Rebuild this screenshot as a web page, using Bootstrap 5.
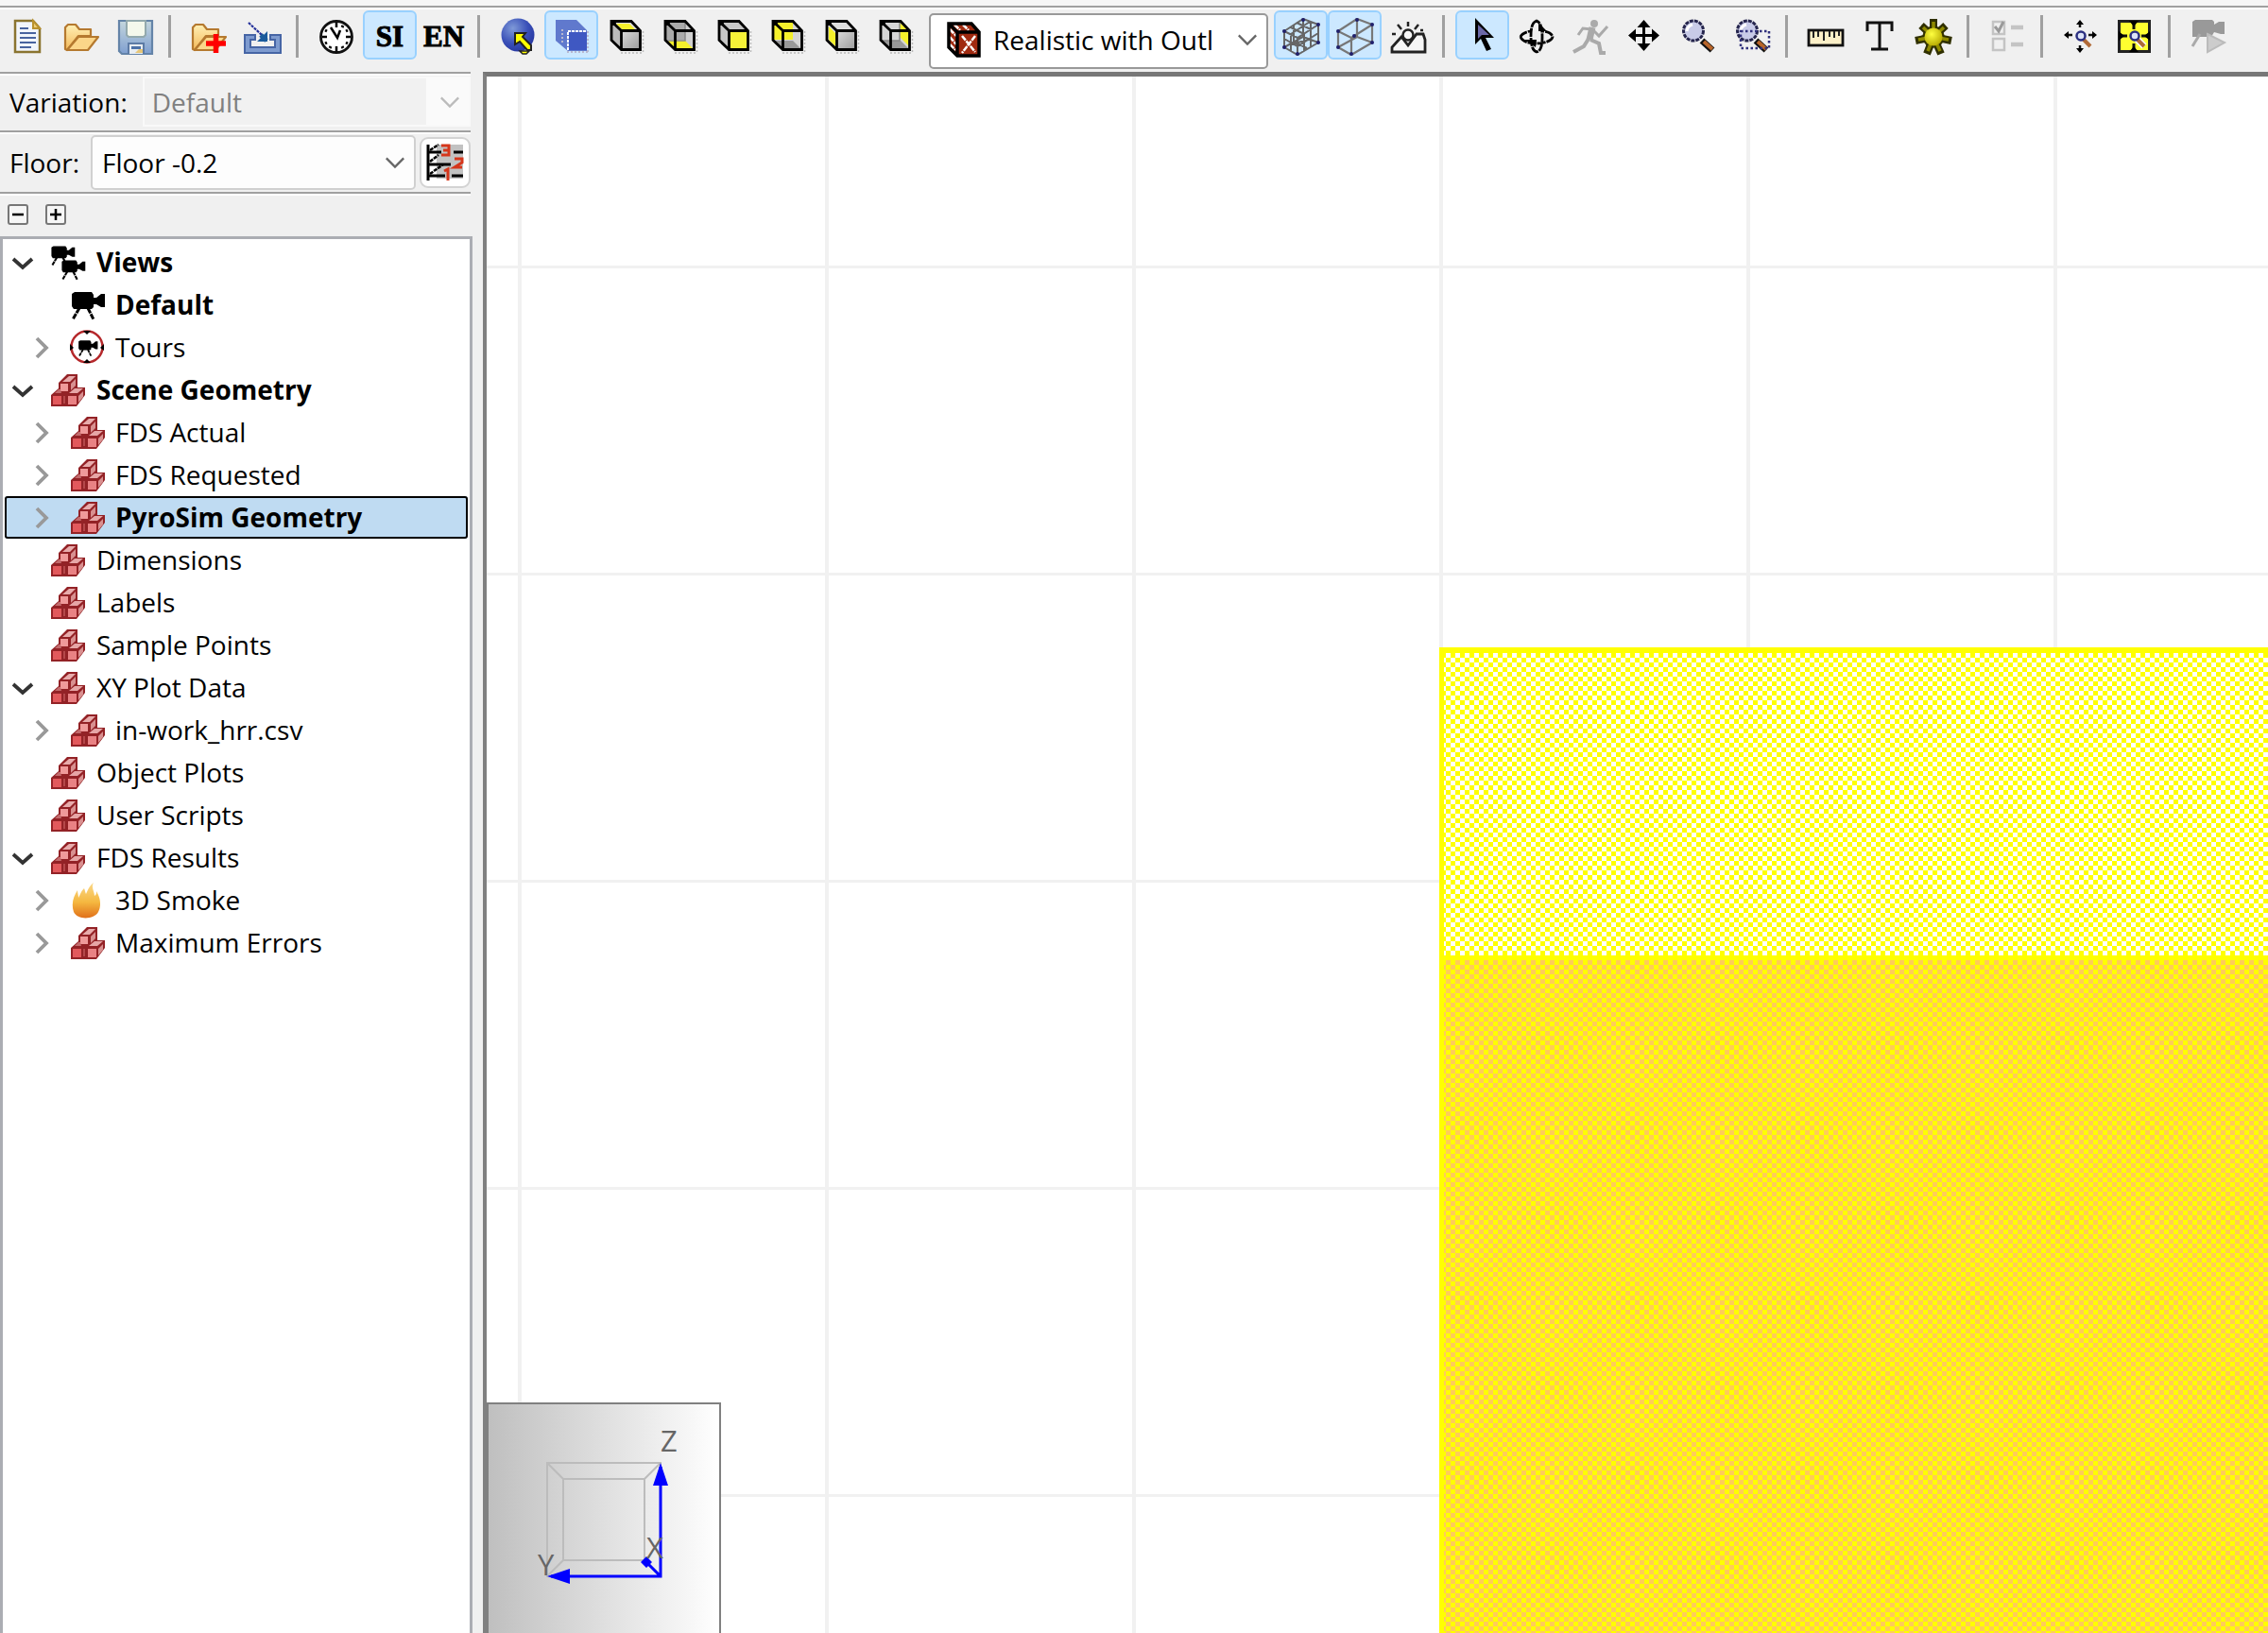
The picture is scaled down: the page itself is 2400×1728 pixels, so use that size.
<!DOCTYPE html>
<html lang="en">
<head>
<meta charset="utf-8">
<meta name="viewport" content="width=device-width, initial-scale=1">
<title>Results Viewer</title>
<link rel="stylesheet" href="https://cdn.jsdelivr.net/npm/bootstrap@5.3.0/dist/css/bootstrap.min.css">
<style>
body{font-family:"Open Sans","Noto Sans",sans-serif;font-size:28px;line-height:40px;color:#000;background:#f0f0f0}
.topstrip{height:10px;background:#f6f6f6;border-bottom:2px solid #fff;box-shadow:inset 0 -2px #a0a0a0}
.toolbar{height:66px}
.tool{width:57px;height:52px;margin-top:1px;padding:6px 0 2px;border:2px solid transparent;border-radius:6px;line-height:0;color:#000}
.tool.active{background:#cce8ff;border-color:#99d1ff}
.tool:disabled{border-color:transparent;opacity:1}
.tool svg{width:40px;height:40px;display:block;margin:auto}
.tool-text{font:bold 31px/40px "Liberation Serif",serif;-webkit-text-stroke:1px #000}
.divider{width:3px;height:45px;margin:6px 11px 0 7px;background:#a0a0a0}
.combo{height:59px;border:2px solid #999;border-radius:5px;background:#fff}
.render-combo{width:359px;margin:4px 6px 0 8px;padding:0 0 3px 16px}
.pick{font-size:28px;line-height:40px;color:#000;border:0;background-color:transparent;padding:0 0 0 12px;border-radius:0;
background-image:url("data:image/svg+xml,%3Csvg xmlns='http://www.w3.org/2000/svg' viewBox='0 0 24 24'%3E%3Cpath d='M2 7l10 10 10-10' fill='none' stroke='%23666' stroke-width='2.5'/%3E%3C/svg%3E");background-size:22px 22px;background-position:right 9px center}
.pick:focus{box-shadow:none}
.side{width:511px}
.band{width:498px;border-top:2px solid #a0a0a0;box-shadow:inset 0 2px #fff}
.variation{height:62px;padding:3px 0 4px 10px}
.floor{height:65px;padding:3px 0 2px 10px}
.floor .pick{padding-left:10px}
.expanders{height:47px;padding:11px 8px;gap:18px}
.variation .pick{height:53px;border:2px solid #f9f9f9;padding-left:8px;color:#808080;opacity:1;background-color:#f1f1f1;
background-image:url("data:image/svg+xml,%3Csvg xmlns='http://www.w3.org/2000/svg' viewBox='0 0 24 24'%3E%3Cpath d='M2 7l10 10 10-10' fill='none' stroke='%23bbb' stroke-width='2.5'/%3E%3C/svg%3E"),linear-gradient(#fafafa,#fafafa);
background-size:22px 22px,45px 100%;background-position:right 9px center,right center;background-repeat:no-repeat}
.floor-combo{border-color:#d0d0d0;background:#fdfdfd;width:344px;height:58px}
.floor-btn{width:54px;height:54px;background:#fff;border:2px solid #d3d3d3;border-radius:9px;padding:0;line-height:0}
.mini{width:22px;height:22px;border:2px solid #777;border-radius:3px;background:#f6f6f6;padding:0;line-height:0}
.mini svg{width:18px;height:18px;display:block}
.tree{width:500px;border:3px solid #abadb3;border-bottom:0;background:#fff;padding:2px 2px 0}
.node{height:45px;padding-left:0;line-height:41px}
.node.child{padding-left:21px}
.node.selected{background:#bfdbf2;border-radius:3px;box-shadow:inset 0 0 0 2px #000}
.twist{width:38px;height:45px;border:0;background:none;padding:0;margin-right:10px;line-height:0}
.twist svg{width:26px;height:26px}
.glyph{width:38px;height:38px;margin-right:11px}
.node.child .glyph{margin-right:10px}
.view{border-left:4px solid #808080;border-top:5px solid #777;background:#fff}
.scene{position:absolute;inset:0;width:100%;height:100%}
.navcube{position:absolute;left:0;bottom:0;width:248px;height:244px}
.axis{font-family:"Open Sans",sans-serif;font-size:31px}
</style>
</head>
<body class="vh-100 d-flex flex-column overflow-hidden">

<svg width="0" height="0" class="position-absolute" aria-hidden="true">
<defs>
<linearGradient id="gold" x1="0" y1="0" x2="0" y2="1"><stop offset="0" stop-color="#fff0b5"/><stop offset="1" stop-color="#f3b95a"/></linearGradient>
<linearGradient id="steel" x1="0" y1="0" x2="0" y2="1"><stop offset="0" stop-color="#c5d7dd"/><stop offset="1" stop-color="#7f9fd0"/></linearGradient>
<linearGradient id="grey" x1="0" y1="0" x2="1" y2="1"><stop offset="0" stop-color="#ddd"/><stop offset="1" stop-color="#999"/></linearGradient>
<linearGradient id="fire" x1="0" y1="0" x2="0" y2="1"><stop offset="0" stop-color="#fbd98a"/><stop offset=".55" stop-color="#f5b840"/><stop offset="1" stop-color="#e0701a"/></linearGradient>
<radialGradient id="ball" cx=".35" cy=".3" r=".75"><stop offset="0" stop-color="#7f9ad8"/><stop offset=".6" stop-color="#3a50b8"/><stop offset="1" stop-color="#2636a0"/></radialGradient>
<radialGradient id="sunball" cx=".4" cy=".35" r=".7"><stop offset="0" stop-color="#ffff40"/><stop offset="1" stop-color="#b5a800"/></radialGradient>
<symbol id="folder" viewBox="0 0 40 40"><path d="M3 33V10l3-3h8l4 5h12v7H17L5 34z" fill="url(#gold)" stroke="#b5792f" stroke-width="2.2" stroke-linejoin="round"/><path d="M5 34L17 20h21L27 34z" fill="#fbd689" stroke="#b5792f" stroke-width="2.2" stroke-linejoin="round"/></symbol>
<symbol id="cubeedges" viewBox="0 0 40 40"><path d="M5 3.500H26L35.500 13.500V33.500H15.500L5 23.500zM5 3.500L15.500 13.500M15.500 33.500V13.500H35.500" fill="none" stroke="#000" stroke-width="2.800"/><path d="M4 2h7L9 8H4z"/><path d="M15 37H38M38.500 14V36" stroke="#bbb" stroke-width="1.500" stroke-dasharray="2 2"/></symbol>
<symbol id="cam" viewBox="0 0 38 38"><path d="M2 4l3-2h18l2 3v3h3l5-4h4v14h-4l-5-3h-3v3l-2 2H4l-2-3z"/><path d="M10 19L3 31M19 19l6 12" stroke="currentColor" stroke-width="3" stroke-dasharray="6 1"/></symbol>
<symbol id="blocks" viewBox="0 0 38 38">
<path d="M9 11l9-9h11v14h8v8L28 36H1V24l8-7z" fill="#932226"/>
<path d="M13 10l7-6h7l-6 6z" fill="#e8acac"/><path d="M22 12l5-5v7l-5 5z" fill="#d89090"/>
<rect x="11" y="12" width="8" height="8" fill="#ef9a9a"/>
<path d="M5 22l4-4h2l1 4z" fill="#c26a6c"/><rect x="3" y="25" width="9" height="9" fill="#e2595c"/>
<path d="M20 22l6-5h9l-6 5z" fill="#e6a6a6"/><path d="M30 25l5-5v6l-5 6z" fill="#d99090"/>
<rect x="19" y="25" width="9" height="9" fill="#e98284"/><path d="M14 25h2v8h-2z" fill="#b4484a"/></symbol>
<symbol id="down" viewBox="0 0 26 26"><path d="M3 9l10 9 10-9" fill="none" stroke="#333" stroke-width="3.800"/></symbol>
<symbol id="right" viewBox="0 0 26 26"><path d="M7 3l10 10L7 23" fill="none" stroke="#999" stroke-width="3.800"/></symbol>
<symbol id="lens" viewBox="0 0 40 40"><path d="M24 24l11 10" stroke="#111" stroke-width="7"/><path d="M26 25l9 8" stroke="#b8652a" stroke-width="4"/><circle cx="15" cy="13.500" r="10.500" fill="#c8cbe8" stroke="#25254d" stroke-width="3" stroke-dasharray="4 1"/><path d="M8 14a8 8 0 0 1 6-7" stroke="#fff" stroke-width="3" fill="none"/></symbol>
<pattern id="hatch" width="10" height="10" patternUnits="userSpaceOnUse" x="0" y="0"><rect width="10" height="10" fill="#ff0"/><path d="M5 0h5v5H5zM0 5h5v5H0z" fill="#fff"/></pattern>
<pattern id="hatch2" width="10" height="10" patternUnits="userSpaceOnUse" x="0" y="0"><rect width="10" height="10" fill="#ff0"/><path d="M5 0h5v5H5zM0 5h5v5H0z" fill="#ffcc59"/></pattern>
<pattern id="grid" width="325" height="325" patternUnits="userSpaceOnUse" x="33" y="200"><path d="M0 0h4v325H0z" fill="#f1f1f1"/><path d="M0 0h325v3H0z" fill="#f1f1f1"/></pattern>
<linearGradient id="shade" x1="0" x2="1" y1="0" y2="0"><stop offset="0" stop-color="#bfbfbf"/><stop offset="1" stop-color="#fff"/></linearGradient>
</defs></svg>

<header class="flex-shrink-0">
<div class="topstrip"></div>
<div class="toolbar d-flex align-items-start" role="toolbar" aria-label="Main toolbar">
<button class="btn tool" aria-label="New"><svg viewBox="0 0 40 40"><path d="M7 3h19l7 8v25H7z" fill="#f1f5fb" stroke="#8a7430" stroke-width="2.500"/><path d="M26 3v8h7z" fill="#f0cf75" stroke="#b9922f" stroke-width="2"/><path d="M12 11h9M12 16h17M12 21h17M12 26h17M12 31h12" stroke="#48639f" stroke-width="2"/></svg></button>
<button class="btn tool" aria-label="Open"><svg><use href="#folder"/></svg></button>
<button class="btn tool" aria-label="Save"><svg viewBox="0 0 40 40"><path d="M3 3h35v35H6l-3-3z" fill="url(#steel)" stroke="#6484a8" stroke-width="2.200"/><path d="M11 3h20v15l-2 2H13l-2-2z" fill="#f4f8ec" stroke="#93a9ad" stroke-width="2"/><path d="M13 38V27h16v11" fill="#e8edf2" stroke="#5d7ba5" stroke-width="2"/><path d="M16 30h10v3H16z" fill="#4d71a7"/><path d="M24 33h4v4h-8z" fill="#e6c678"/></svg></button>
<div class="divider"></div>
<button class="btn tool" aria-label="Add results"><svg viewBox="0 0 40 40"><use href="#folder"/><path d="M17 27h21M27.500 17v20" stroke="#f00" stroke-width="5.500"/></svg></button>
<button class="btn tool" aria-label="Import"><svg viewBox="0 0 40 40"><path d="M1 18h11v5H7v8h26v-8h-5v-5h11v19H1z" fill="#7e9bcf" stroke="#4665a5" stroke-width="2"/><path d="M5 5l14 13" stroke="#23309a" stroke-width="2.200" stroke-dasharray="3 1"/><path d="M25 14v11H14z" fill="#1b5c9c"/><path d="M18 18l6 6" stroke="#1b5c9c" stroke-width="5"/></svg></button>
<div class="divider"></div>
<button class="btn tool" aria-label="Time"><svg viewBox="0 0 40 40"><circle cx="20" cy="20" r="16.500" fill="#fff" stroke="#111" stroke-width="2.800"/><path d="M20 5v5M20 30v5M5 20h5M30 20h5M14 10l7 11 3-8" fill="none" stroke="#000" stroke-width="2.500"/><path d="M27 8l-1 2M32 13l-2 1M32 27l-2-1M27 32l-1-2M13 32l1-2M8 27l2-1M8 13l2 1" stroke="#000" stroke-width="3"/></svg></button>
<button class="btn tool tool-text active">SI</button>
<button class="btn tool tool-text">EN</button>
<div class="divider"></div>
<button class="btn tool" aria-label="Reset view"><svg viewBox="0 0 40 40"><circle cx="20" cy="18" r="17.500" fill="url(#ball)"/><path d="M17 16h11l-3 4 9 9v5h-4l-8-9-5 3z" fill="#ff0" stroke="#222" stroke-width="2"/><path d="M22 35h10l-3 3h-4z" fill="#ff0" stroke="#222" stroke-width="1.500"/></svg></button>
<button class="btn tool active" aria-label="Isometric view"><svg viewBox="0 0 40 40"><path d="M3 2h22l11 11v22H16L3 24z" fill="#6079cd"/><rect x="17" y="15" width="19" height="19" fill="#3f58c2"/><path d="M16 34V14h20" fill="none" stroke="#fff" stroke-width="2" stroke-dasharray="3 1"/><path d="M10 12v14M15 36h22M37 14v22" stroke="#b8b8d0" stroke-width="2" stroke-dasharray="2 2"/></svg></button>
<button class="btn tool" aria-label="Top view"><svg viewBox="0 0 40 40"><path d="M5 3l10 10v20L5 24z" fill="#bbb"/><path d="M5 3h21l10 10H15z" fill="#ddd"/><path d="M10 6h14l6 6H16z" fill="#f4f02c"/><path d="M15 13h21v21H15z" fill="url(#grey)"/><use href="#cubeedges"/></svg></button>
<button class="btn tool" aria-label="Bottom view"><svg viewBox="0 0 40 40"><path d="M5 3h21l10 10v20H15L5 24z" fill="#d0d0d0"/><path d="M5 3h21v20H5z" fill="#aaa"/><path d="M5 24h21l10 10H15z" fill="#f4f02c"/><path d="M5 24h21V3" stroke="#888" stroke-width="1.500" fill="none"/><use href="#cubeedges"/></svg></button>
<button class="btn tool" aria-label="Front view"><svg viewBox="0 0 40 40"><path d="M5 3h21l10 10v20H15L5 24z" fill="#c6c6c6"/><path d="M15 13h21v21H15z" fill="#f6f238"/><use href="#cubeedges"/></svg></button>
<button class="btn tool" aria-label="Back view"><svg viewBox="0 0 40 40"><path d="M5 3h21l10 10v20H15L5 24z" fill="#d5d5d5"/><path d="M5 24h21l9 9H15z" fill="#999"/><path d="M5 3h21v20H5z" fill="#f4f02c"/><use href="#cubeedges"/></svg></button>
<button class="btn tool" aria-label="Left view"><svg viewBox="0 0 40 40"><path d="M5 3h21l10 10v20H15z" fill="#ddd"/><path d="M5 3l10 10v20L5 24z" fill="#ddd"/><path d="M7 9l7 7v14l-7-7z" fill="#f4f02c"/><path d="M15 13h21v21H15z" fill="url(#grey)"/><use href="#cubeedges"/></svg></button>
<button class="btn tool" aria-label="Right view"><svg viewBox="0 0 40 40"><path d="M5 3h21l10 10v20H15L5 24z" fill="#d5d5d5"/><path d="M5 24h21l9 9H15z" fill="#999"/><path d="M25 5l10 9v16L25 20z" fill="#f4f02c"/><path d="M25 4v20H6" stroke="#888" stroke-width="1.500" fill="none"/><use href="#cubeedges"/></svg></button>

<div class="combo render-combo d-flex align-items-center">
<svg width="38" height="40" viewBox="0 0 38 40" class="flex-shrink-0"><path d="M3 4h24l8 8v25H13l-10-9z" fill="#a02a10"/><path d="M4 9l7 7M4 17l7 8M9 4l6 6M18 4l6 6M4 25l6 6M17 16l14 17M31 16L17 34" stroke="#fff" stroke-width="2.500" stroke-dasharray="6 1"/><path d="M3 3h24l8 9v25H12l-9-9zM3 3l9 9M12 37V12h23" fill="none" stroke="#000" stroke-width="3.500"/></svg>
<select class="form-select pick" aria-label="Render mode"><option>Realistic with Outl</option></select>
</div>
<button class="btn tool active" aria-label="Show mesh grid"><svg viewBox="0 0 40 40"><path d="M2 14L22 1l16 6v19L16 39 2 31zM2 14l14 7 22-14M16 21v18M22 1v19L2 31M22 20l16 6M2 22l14 8 22-14M9 17v18M23 17v18M30 12v18M9 10l14 7M15 5l15 7M29 4L9 17M12 7v18M30 4v18M12 25l14 7M8 28l20-5" fill="none" stroke="#666" stroke-width="2"/><g fill="#20206c"><circle cx="22" cy="2" r="2"/><circle cx="38" cy="7" r="2"/><circle cx="38" cy="26" r="2"/><circle cx="16" cy="38" r="2"/><circle cx="2" cy="31" r="2"/><circle cx="2" cy="14" r="2"/></g></svg></button>
<button class="btn tool active" aria-label="Show mesh outline"><svg viewBox="0 0 40 40"><path d="M2 14L22 1l16 6v19L16 39 2 31zM2 14l14 7 22-14M16 21v18M22 1v19L2 31M22 20l16 6" fill="none" stroke="#777" stroke-width="2.200"/><g fill="#20206c"><circle cx="22" cy="2" r="2"/><circle cx="38" cy="7" r="2"/><circle cx="38" cy="26" r="2"/><circle cx="16" cy="38" r="2"/><circle cx="2" cy="31" r="2"/><circle cx="2" cy="14" r="2"/><circle cx="19" cy="19" r="2"/></g></svg></button>
<button class="btn tool" aria-label="Environment"><svg viewBox="0 0 40 40"><path d="M2 36v-5l10-11 7 9 9-12h7l2 6v13z" fill="#f6f6f6" stroke="#222" stroke-width="2.800"/><circle cx="19" cy="18" r="5.500" fill="#f6f6f6" stroke="#222" stroke-width="2.500"/><path d="M19 4v5M8 7l4 5M30 7l-4 5M2 17h4M32 13h3" stroke="#222" stroke-width="2.500"/></svg></button>
<div class="divider"></div>
<button class="btn tool active" aria-label="Select"><svg viewBox="0 0 40 40"><path d="M12 0v28l6-6 6 13 5-2-6-12h9z" fill="#000"/><path d="M15 7v15l4-4h8z" fill="#6a68a8"/></svg></button>
<button class="btn tool" aria-label="Orbit"><svg viewBox="0 0 40 40"><path d="M20 3c-5 2-6 8-6 17s2 15 6 16c5-1 6-8 6-16S25 5 20 3zM3 20c2 5 9 7 16 7s17-2 18-7c-1-4-6-6-11-6M3 20c1-3 5-5 10-6" fill="none" stroke="#000" stroke-width="2.800" stroke-dasharray="9 1"/><path d="M22 5l9 9h-9zM7 23h13l-1 8z"/></svg></button>
<button class="btn tool" disabled aria-label="Roam"><svg viewBox="0 0 40 40"><g fill="none" stroke="#aaa"><circle cx="24" cy="6" r="4" fill="#aaa" stroke="none"/><path d="M22 10l-3 13" stroke-width="7"/><path d="M21 12L12 11l-5 7M23 13l6 6 9-10" stroke-width="3"/><path d="M18 22l-5 8-11 6M20 23l9 4 2 10h5" stroke-width="4"/></g></svg></button>
<button class="btn tool" aria-label="Pan"><svg viewBox="0 0 40 40"><path d="M19.500 5v28M6 18.500h28" stroke="#000" stroke-width="3"/><path d="M19.500 2l7 8h-14zM19.500 35l7-8h-14zM3 18.500l8-7v14zM36 18.500l-8-7v14z"/></svg></button>
<button class="btn tool" aria-label="Zoom"><svg><use href="#lens"/></svg></button>
<button class="btn tool" aria-label="Zoom box"><svg viewBox="0 0 40 40"><use href="#lens"/><path d="M8 14h30v18H8z" fill="none" stroke="#30307c" stroke-width="2.500" stroke-dasharray="2.500 2.500"/></svg></button>
<div class="divider"></div>
<button class="btn tool" aria-label="Measure"><svg viewBox="0 0 40 40"><rect x="2" y="13" width="36" height="16" fill="#fcf0c8" stroke="#111" stroke-width="2.800"/><path d="M7 14v7M12 14v6M18 14v10M24 14v6M29 14v7M34 14v5" stroke="#222" stroke-width="2"/></svg></button>
<button class="btn tool" aria-label="Label"><svg viewBox="0 0 40 40"><path d="M7 14V5h26v9M20 5v28M11 33h18" fill="none" stroke="#111" stroke-width="3"/></svg></button>
<button class="btn tool" aria-label="Light"><svg viewBox="0 0 40 40"><circle cx="20" cy="20" r="11.500" fill="#3a3800"/><path d="M20 20V1M20 20L33 8M20 20l19 4M20 20l8 18M20 20l-7 18M20 20L1 24M20 20L7 8" stroke="#303000" stroke-width="8"/><path d="M20 20V4M20 20L31 10M20 20l16 3M20 20l7 15M20 20l-6 15M20 20L4 23M20 20L9 10" stroke="#8f8a00" stroke-width="3.500"/><circle cx="20" cy="20" r="9.500" fill="url(#sunball)"/></svg></button>
<div class="divider"></div>
<button class="btn tool" disabled aria-label="Options"><svg viewBox="0 0 40 40"><path d="M5 4h12v13H5zM5 22h12v12H5z" fill="#f0f0f0" stroke="#c4c4c4" stroke-width="2.500"/><path d="M7 9l4 5 5-10" fill="none" stroke="#999" stroke-width="3"/><path d="M24 10h13M24 28h13" stroke="#c4c4c4" stroke-width="4.500"/></svg></button>
<div class="divider"></div>
<button class="btn tool" aria-label="Zoom extents"><svg viewBox="0 0 40 40"><path d="M19 4v6M4 18h7M28 18h7M19 29v6" stroke="#111" stroke-width="2.500"/><path d="M19 2l4 5h-8zM19 37l4-5h-8zM2 18l5-4v8zM37 18l-5-4v8z"/><path d="M22 22l8 8" stroke="#b06a38" stroke-width="4"/><circle cx="20" cy="19" r="4.500" fill="#dde4f8" stroke="#2b2f80" stroke-width="2.500"/></svg></button>
<button class="btn tool" aria-label="Fit selection"><svg viewBox="0 0 40 40"><path d="M3.500 3.500h32v32h-32z" fill="#ffff30" stroke="#222" stroke-width="3"/><path d="M19 4v8M4 19h8M27 19h8M19 27v8" stroke="#111" stroke-width="3"/><path d="M14 3h10l-5 6zM14 36h10l-5-6zM3 14v10l6-5zM36 14v10l-6-5z"/><path d="M22 22l8 8" stroke="#fff" stroke-width="7"/><path d="M22 22l8 8" stroke="#b06a38" stroke-width="4"/><circle cx="20" cy="19" r="4.500" fill="#dde4f8" stroke="#2b2f80" stroke-width="2.500"/></svg></button>
<div class="divider"></div>
<button class="btn tool" disabled aria-label="Play tour"><svg viewBox="0 0 40 40"><path d="M3 4l3-2h18l2 2v3l5-3h6v13h-4l-7-2-3 5H3z" fill="#999"/><path d="M11 17L3 30" stroke="#aaa" stroke-width="3"/><path d="M19 17l18 9-18 10z" fill="#ccc" stroke="#bbb" stroke-width="2"/></svg></button>
</div>
</header>

<div class="d-flex flex-grow-1 overflow-hidden">
<aside class="side d-flex flex-column flex-shrink-0">
<div class="band variation d-flex align-items-center"><label for="variation" class="flex-shrink-0 me-3">Variation:</label>
<select id="variation" class="form-select pick" disabled><option>Default</option></select></div>
<div class="band floor d-flex align-items-center"><label for="floor" class="flex-grow-1">Floor:</label>
<div class="combo floor-combo d-flex align-items-center"><select id="floor" class="form-select pick"><option>Floor -0.2</option></select></div>
<button class="btn floor-btn ms-1" aria-label="Manage floors"><svg width="42" height="42" viewBox="0 0 42 42"><path d="M12 2h28v36H12z" fill="#c2c2c2"/><path d="M3 2v38" stroke="#000" stroke-width="3"/><path d="M3 10h14M30 10h10M3 23h24M3 35h18M28 35h12" stroke="#000" stroke-width="3"/><path d="M5 8l9-6M5 20l9-7M5 33l14-10" stroke="#000" stroke-width="2.500" stroke-dasharray="4 1"/><path d="M17 3h8v10h-8M19 8h6M31 17h8v4l-8 5h8M20 30l4-2v12" fill="none" stroke="#d5361b" stroke-width="3"/></svg></button></div>
<div class="band expanders d-flex"><button class="btn mini" aria-label="Collapse all"><svg viewBox="0 0 18 18"><path d="M3 9h12" stroke="#000" stroke-width="2.500"/></svg></button>
<button class="btn mini" aria-label="Expand all"><svg viewBox="0 0 18 18"><path d="M3 9h12M9 3v12" stroke="#000" stroke-width="2.500"/></svg></button></div>

<div class="tree flex-grow-1" role="tree" aria-label="Scene">
<div class="node d-flex align-items-center fw-bold" role="treeitem"><button class="twist" aria-label="Collapse"><svg><use href="#down"/></svg></button><svg class="glyph" viewBox="0 0 38 38"><use href="#cam" x="0" y="0" width="27" height="27"/><use href="#cam" x="11" y="15" width="27" height="27"/></svg><span>Views</span></div>
<div class="node child d-flex align-items-center fw-bold" role="treeitem"><span class="twist"></span><svg class="glyph"><use href="#cam" y="3"/></svg><span>Default</span></div>
<div class="node child d-flex align-items-center" role="treeitem"><button class="twist" aria-label="Expand"><svg><use href="#right"/></svg></button><svg class="glyph" viewBox="0 0 38 38"><circle cx="18" cy="18" r="16.500" fill="#fff" stroke="#b5282b" stroke-width="2.500"/><path d="M14 1h8l-4 4zM14 35h8l-4-4zM0 15v7l4-3zM36 15v7l-4-3z"/><use href="#cam" x="8" y="10" width="22" height="22"/></svg><span>Tours</span></div>
<div class="node d-flex align-items-center fw-bold" role="treeitem"><button class="twist" aria-label="Collapse"><svg><use href="#down"/></svg></button><svg class="glyph"><use href="#blocks"/></svg><span>Scene Geometry</span></div>
<div class="node child d-flex align-items-center" role="treeitem"><button class="twist" aria-label="Expand"><svg><use href="#right"/></svg></button><svg class="glyph"><use href="#blocks"/></svg><span>FDS Actual</span></div>
<div class="node child d-flex align-items-center" role="treeitem"><button class="twist" aria-label="Expand"><svg><use href="#right"/></svg></button><svg class="glyph"><use href="#blocks"/></svg><span>FDS Requested</span></div>
<div class="node child selected d-flex align-items-center fw-bold" role="treeitem" aria-selected="true"><button class="twist" aria-label="Expand"><svg><use href="#right"/></svg></button><svg class="glyph"><use href="#blocks"/></svg><span>PyroSim Geometry</span></div>
<div class="node d-flex align-items-center" role="treeitem"><span class="twist"></span><svg class="glyph"><use href="#blocks"/></svg><span>Dimensions</span></div>
<div class="node d-flex align-items-center" role="treeitem"><span class="twist"></span><svg class="glyph"><use href="#blocks"/></svg><span>Labels</span></div>
<div class="node d-flex align-items-center" role="treeitem"><span class="twist"></span><svg class="glyph"><use href="#blocks"/></svg><span>Sample Points</span></div>
<div class="node d-flex align-items-center" role="treeitem"><button class="twist" aria-label="Collapse"><svg><use href="#down"/></svg></button><svg class="glyph"><use href="#blocks"/></svg><span>XY Plot Data</span></div>
<div class="node child d-flex align-items-center" role="treeitem"><button class="twist" aria-label="Expand"><svg><use href="#right"/></svg></button><svg class="glyph"><use href="#blocks"/></svg><span>in-work_hrr.csv</span></div>
<div class="node d-flex align-items-center" role="treeitem"><span class="twist"></span><svg class="glyph"><use href="#blocks"/></svg><span>Object Plots</span></div>
<div class="node d-flex align-items-center" role="treeitem"><span class="twist"></span><svg class="glyph"><use href="#blocks"/></svg><span>User Scripts</span></div>
<div class="node d-flex align-items-center" role="treeitem"><button class="twist" aria-label="Collapse"><svg><use href="#down"/></svg></button><svg class="glyph"><use href="#blocks"/></svg><span>FDS Results</span></div>
<div class="node child d-flex align-items-center" role="treeitem"><button class="twist" aria-label="Expand"><svg><use href="#right"/></svg></button><svg class="glyph" viewBox="0 0 38 38"><path d="M8 8c0 3 1 5 1 8 2-3 2-6 6-10 1 2 1 4 2 6 2-4 3-8 8-12-3 5 1 9 1 14 2-1 2-3 2-5 5 8 5 16 2 22-4 8-22 9-26 0C1 22 4 14 8 8z" fill="url(#fire)"/></svg><span>3D Smoke</span></div>
<div class="node child d-flex align-items-center" role="treeitem"><button class="twist" aria-label="Expand"><svg><use href="#right"/></svg></button><svg class="glyph"><use href="#blocks"/></svg><span>Maximum Errors</span></div>
</div>
</aside>

<main class="view position-relative flex-grow-1 overflow-hidden">
<svg class="scene" role="img" aria-label="3D scene">
<rect width="100%" height="100%" fill="url(#grid)"/>
<rect x="1008" y="604" width="100%" height="100%" fill="#ff0"/>
<svg x="1010" y="610" width="100%" height="320"><rect width="100%" height="100%" fill="url(#hatch)"/></svg>
<svg x="1010" y="935" width="100%" height="100%"><rect y="0" width="100%" height="100%" fill="url(#hatch2)"/></svg>
<rect x="1008" y="604" width="5" height="100%" fill="#ff0"/>
</svg>
<svg class="navcube" viewBox="0 0 248 244" role="img" aria-label="View axes">
<rect x="1" y="1" width="246" height="246" fill="url(#shade)" stroke="#808080" stroke-width="2"/>
<path d="M64 64h120v120H64zM81 81h86v86H81zM64 64l17 17M184 64l-17 17M64 184l17-17M184 184l-17-17" fill="none" stroke="#bcbcbc" stroke-width="2"/>
<path d="M184 68v116H68M184 184l-15-15" fill="none" stroke="#00f" stroke-width="3"/>
<path d="M184 64l8 24h-16zM64 184l24-8v16zM169 163l6 6-6 6-6-6z" fill="#00f"/>
<g class="axis" fill="#666"><text x="184" y="52">Z</text><text x="54" y="183">Y</text><text x="169" y="165">X</text></g>
</svg>
</main>
</div>
<script src="https://cdn.jsdelivr.net/npm/bootstrap@5.3.0/dist/js/bootstrap.bundle.min.js"></script>
</body>
</html>
